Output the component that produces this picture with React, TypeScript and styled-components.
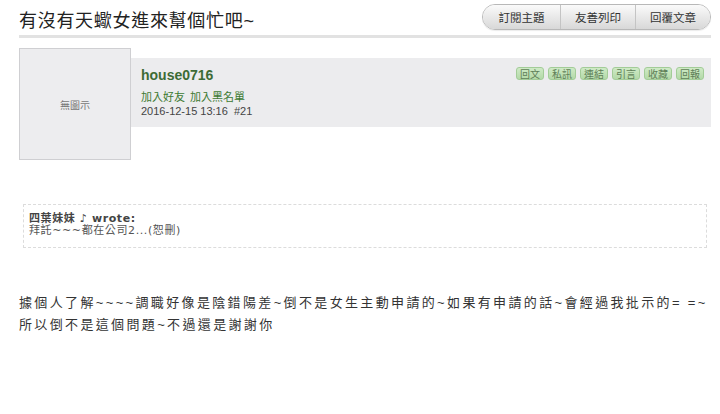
import React from "react";
import styled, { createGlobalStyle } from "styled-components";

const GlobalStyle = createGlobalStyle`
  html, body { margin: 0; padding: 0; background: #fff; }
  body { font-family: "Liberation Sans", Arial, "Noto Sans CJK TC", sans-serif; color: #333; }
`;

const Page = styled.div`
  width: 720px;
  height: 414px;
  overflow: hidden;
  padding: 0 9px 0 19px;
  box-sizing: border-box;
`;

const Header = styled.div`
  display: flex;
  align-items: flex-start;
  justify-content: space-between;
  height: 35px;
  border-bottom: 3px solid #e2e2e2;
`;

const Title = styled.h1`
  margin: 0;
  padding-top: 10px;
  font-family: "Liberation Sans", "Noto Sans CJK TC", sans-serif;
  font-weight: normal;
  font-size: 18px;
  line-height: 22px;
  color: #222;
  letter-spacing: 0.7px;
`;

const ButtonGroup = styled.div`
  display: flex;
  margin-top: 4px;
  border: 1px solid #b8b8b8;
  border-radius: 13px;
  overflow: hidden;
  box-shadow: 0 1px 1px rgba(0,0,0,0.08);
`;

const GroupButton = styled.button<{ $w: number }>`
  width: ${(p) => p.$w}px;
  height: 24px;
  border: none;
  border-left: 1px solid #c4c4c4;
  &:first-child { border-left: none; }
  background: linear-gradient(#fafafa, #d8d8d8);
  font-family: "Liberation Sans", "Noto Sans CJK TC", sans-serif;
  font-size: 11.5px;
  color: #333;
  padding: 0;
  cursor: pointer;
`;

const Post = styled.div`
  display: flex;
  align-items: flex-start;
  margin-top: 10px;
`;

const Avatar = styled.div`
  width: 110px;
  height: 110px;
  flex: none;
  border: 1px solid #cfcfd2;
  background: #ededef;
  display: flex;
  align-items: center;
  justify-content: center;
  font-family: "Noto Sans CJK TC", sans-serif;
  font-size: 10px;
  color: #777;
`;

const InfoPanel = styled.div`
  flex: 1;
  margin-top: 10px;
  height: 69px;
  background: #ececee;
  display: flex;
  justify-content: space-between;
  align-items: flex-start;
  padding: 0 7px 0 10px;
`;

const UserCol = styled.div`
  display: flex;
  flex-direction: column;
  padding-top: 9px;
`;

const UserName = styled.div`
  font-family: "Liberation Sans", Arial, sans-serif;
  font-weight: bold;
  font-size: 14px;
  line-height: 17px;
  color: #3d6b35;
  margin-bottom: 6px;
`;

const LinkRow = styled.div`
  display: flex;
  gap: 5px;
  font-family: "Liberation Sans", "Noto Sans CJK TC", sans-serif;
  font-size: 11px;
  line-height: 14px;
  color: #3d7a32;
`;

const DateLine = styled.div`
  font-family: "Liberation Sans", Arial, sans-serif;
  font-size: 11px;
  line-height: 14px;
  color: #444;
  white-space: pre;
`;

const ActionRow = styled.div`
  display: flex;
  gap: 4px;
  margin-top: 9px;
`;

const ActionButton = styled.span`
  display: inline-flex;
  align-items: center;
  height: 11px;
  padding: 0 3px;
  border: 1px solid #a3cc98;
  border-radius: 3px;
  background: linear-gradient(#cfeac6, #b3d9a8);
  font-family: "Noto Sans CJK TC", sans-serif;
  font-size: 10px;
  color: #5f7f58;
`;

const Quote = styled.div`
  margin: 44px 4px 0 4px;
  border: 1px dashed #dcdcdc;
  padding: 8px 5px 10px 5px;
  font-family: "DejaVu Sans", Verdana, "Noto Sans CJK TC", sans-serif;
  font-size: 11px;
  line-height: 12px;
  letter-spacing: 0.6px;
  color: #555;
`;

const QuoteAuthor = styled.div`
  font-weight: bold;
  color: #444;
`;

const Body = styled.div`
  margin-top: 44px;
  font-family: "Liberation Sans", "Noto Sans CJK TC", sans-serif;
  font-size: 13px;
  line-height: 22px;
  letter-spacing: 2.35px;
  color: #333;
`;

const actions = ["回文", "私訊", "連結", "引言", "收藏", "回報"];

export default function App() {
  return (
    <Page>
      <GlobalStyle />
      <Header>
        <Title>有沒有天蠍女進來幫個忙吧~</Title>
        <ButtonGroup>
          <GroupButton $w={77}>訂閱主題</GroupButton>
          <GroupButton $w={75}>友善列印</GroupButton>
          <GroupButton $w={75}>回覆文章</GroupButton>
        </ButtonGroup>
      </Header>
      <Post>
        <Avatar>無圖示</Avatar>
        <InfoPanel>
          <UserCol>
            <UserName>house0716</UserName>
            <LinkRow>
              <span>加入好友</span>
              <span>加入黑名單</span>
            </LinkRow>
            <DateLine>{"2016-12-15 13:16  #21"}</DateLine>
          </UserCol>
          <ActionRow>
            {actions.map((a) => (
              <ActionButton key={a}>{a}</ActionButton>
            ))}
          </ActionRow>
        </InfoPanel>
      </Post>
      <Quote>
        <QuoteAuthor>四葉妹妹 ♪ wrote:</QuoteAuthor>
        <div>拜託~~~都在公司2...(恕刪)</div>
      </Quote>
      <Body>
        <div>據個人了解~~~~調職好像是陰錯陽差~倒不是女生主動申請的~如果有申請的話~會經過我批示的= =~</div>
        <div>所以倒不是這個問題~不過還是謝謝你</div>
      </Body>
    </Page>
  );
}
